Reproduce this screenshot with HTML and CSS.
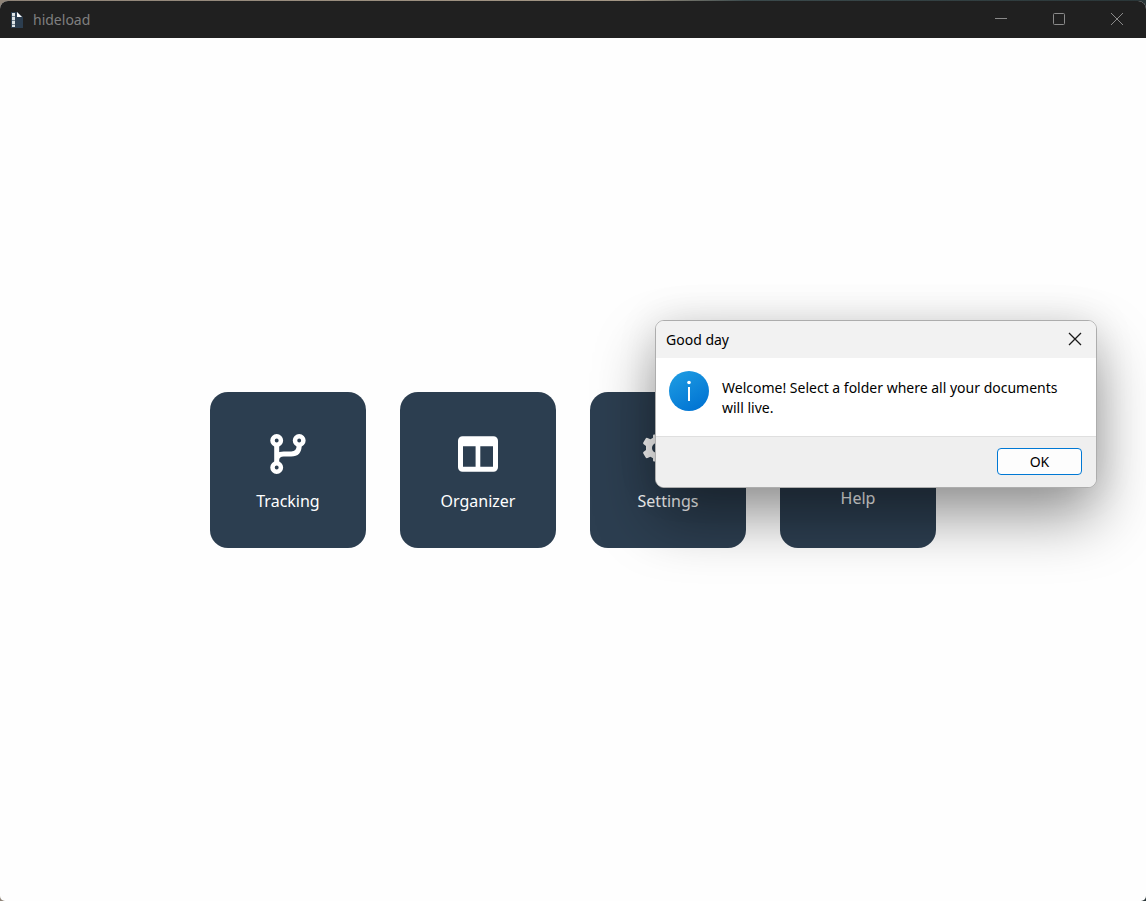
FILE: index.html
```html
<!DOCTYPE html>
<html lang="en">

<head>
    <meta charset="UTF-8" />
    <meta name="viewport" content="width=device-width, initial-scale=1.0" />
    <title>hideload</title>
    <link rel="stylesheet" href="styles.css">
</head>

<body>

    <div class="window">
        <!-- Title bar -->
        <header class="titlebar">
            <svg class="app-icon" viewBox="0 0 12 18" aria-hidden="true">
                <path d="M0 1h6l6 5v11H0z" fill="#2c3e50" />
                <path d="M6 1l5 5H6z" fill="#fff" />
                <path d="M2.500 2v14" stroke="#71808c" stroke-width="3" />
                <path d="M2.500 2v14" stroke="#dde3e6" stroke-width="3" stroke-dasharray="3 1" />
            </svg>
            <span class="app-name">hideload</span>
            <div class="window-buttons">
                <button aria-label="Minimize">
                    <svg viewBox="0 0 12 12"><path d="M0 5.500h12" /></svg>
                </button>
                <button aria-label="Maximize">
                    <svg viewBox="0 0 12 12"><rect x="0.500" y="0.500" width="11" height="11" rx="1" /></svg>
                </button>
                <button aria-label="Close">
                    <svg viewBox="0 0 12 12"><path d="M0 0l12 12M12 0L0 12" /></svg>
                </button>
            </div>
        </header>

        <!-- Main menu -->
        <main class="menu">
            <button class="card">
                <svg class="icon" viewBox="0 0 40 40" fill="none" stroke="#fff">
                    <g stroke-width="4.500">
                        <circle cx="8.700" cy="6.500" r="4.200" />
                        <circle cx="31.200" cy="6.500" r="4.200" />
                        <circle cx="8.700" cy="33.500" r="4.200" />
                    </g>
                    <path d="M8.700 11v18M31.200 11c0 6-3 9-8 9h-7.500c-4.500 0-7 2-7 6" stroke-width="5" />
                </svg>
                <span>Tracking</span>
            </button>
            <button class="card">
                <svg class="icon" viewBox="0 0 40 40" fill="#fff">
                    <path fill-rule="evenodd" d="M4.500 2.200h31a4.500 4.500 0 0 1 4.500 4.500v26.600a4.500 4.500 0 0 1-4.500 4.500h-31a4.500 4.500 0 0 1-4.500-4.500v-26.600a4.500 4.500 0 0 1 4.500-4.500zM5 12.200v20.500h12.600V12.200zM22.300 12.200v20.500H35V12.200z" />
                </svg>
                <span>Organizer</span>
            </button>
            <button class="card">
                <svg class="icon wide" viewBox="0 0 50 40" fill="#fff">
                    <path fill-rule="evenodd" d="M10 1.500Q10 0.500 11 0.500H17Q18 0.500 18 1.500V3.800L20.500 5.300L23.500 4Q24.700 3.500 25.300 4.500L27.700 8.500Q28.200 9.700 27.300 10.300L25 12V16L27.300 17.700Q28.200 18.300 27.700 19.500L25.300 23.500Q24.700 24.500 23.500 24L20.500 22.700L18 24.200V26.500Q18 27.500 17 27.500H11Q10 27.500 10 26.500V24.200L7.500 22.700L4.500 24Q3.300 24.500 2.700 23.500L0.300 19.500Q-0.200 18.300 0.700 17.700L3 16V12L0.700 10.300Q-0.200 9.700 0.300 8.500L2.700 4.500Q3.300 3.500 4.500 4L7.500 5.300L10 3.800zM14 9a5 5 0 1 0 0 10a5 5 0 1 0 0-10z" />
                    <g fill="none" stroke="#fff" stroke-width="4">
                        <circle cx="40" cy="8" r="4" />
                        <circle cx="40" cy="32" r="4" />
                    </g>
                </svg>
                <span>Settings</span>
            </button>
            <button class="card help">
                <svg class="icon" viewBox="0 0 40 40" fill="none" stroke="#fff" stroke-width="6">
                    <path d="M11 12c0-11 18-11 18 0 0 7-9 7-9 15M20 31v6" />
                </svg>
                <span>Help</span>
            </button>
        </main>
    </div>

    <!-- Welcome message -->
    <div class="dialog" role="dialog" aria-labelledby="dialog-title">
        <div class="dialog-title">
            <span id="dialog-title">Good day</span>
            <button class="dialog-close" aria-label="Close">
                <svg viewBox="0 0 12 12"><path d="M0 0l12 12M12 0L0 12" /></svg>
            </button>
        </div>
        <div class="dialog-body">
            <svg class="info" viewBox="0 0 40 40" aria-hidden="true">
                <defs>
                    <linearGradient id="blue" x1="0.2" y1="0" x2="0.8" y2="1">
                        <stop offset="0" stop-color="#1d9be2" />
                        <stop offset="1" stop-color="#0072d2" />
                    </linearGradient>
                </defs>
                <circle cx="20" cy="20" r="20" fill="url(#blue)" />
                <circle cx="20" cy="11.500" r="1.800" fill="#fff" />
                <path d="M20 16v14" stroke="#fff" stroke-width="2" />
            </svg>
            <p>Welcome! Select a folder where all your documents will live.</p>
        </div>
        <div class="dialog-footer">
            <button class="ok">OK</button>
        </div>
    </div>

</body>

</html>
```

FILE: styles.css
```css
* {
    box-sizing: border-box;
}

body {
    margin: 0;
    padding-top: 1px;
    height: 100vh;
    position: relative;
    overflow: hidden;
    background: linear-gradient(90deg, #8f8478 0%, #a39684 55%, #3b4a4c 65%, #2a3638 100%);
    font-family: "Segoe UI", "Noto Sans", "Open Sans", sans-serif;
    font-size: 14px;
}

button {
    padding: 0;
    border: none;
    font-family: inherit;
    cursor: pointer;
}

.window {
    height: 100%;
    display: flex;
    flex-direction: column;
    background-color: #fefefe;
    border-radius: 8px 8px 5px 5px;
    overflow: hidden;
}

/* Title bar */
.titlebar {
    display: flex;
    align-items: center;
    height: 37px;
    padding-left: 11px;
    background-color: #202020;
    color: #7f7f7f;
}

.app-icon {
    width: 12px;
    height: 18px;
    margin-right: 10px;
}

.window-buttons {
    display: flex;
    align-self: stretch;
    margin-left: auto;
}

.window-buttons button {
    width: 58px;
    display: flex;
    justify-content: center;
    align-items: center;
    padding-bottom: 1px;
    background: none;
}

.window-buttons svg,
.dialog-close svg {
    width: 12px;
    height: 12px;
    fill: none;
    stroke: #8a8a8a;
    overflow: visible;
}

/* Menu cards */
.menu {
    flex: 1;
    display: flex;
    justify-content: center;
    align-items: center;
    gap: 34px;
}

.card {
    width: 156px;
    height: 156px;
    display: flex;
    flex-direction: column;
    justify-content: center;
    align-items: center;
    gap: 15px;
    padding-top: 7px;
    background-color: #2c3e50;
    border-radius: 18px;
    color: white;
    font-size: 16px;
    line-height: 24px;
}

.card.help {
    gap: 9px;
}

.icon {
    width: 40px;
    height: 40px;
}

.icon.wide {
    width: 50px;
}

/* Dialog */
.dialog {
    position: absolute;
    top: 320px;
    right: 49px;
    width: 442px;
    background-color: white;
    border: 1px solid #adadad;
    border-radius: 9px;
    box-shadow: 0 30px 60px rgba(0, 0, 0, 0.4), 0 0 40px rgba(0, 0, 0, 0.1);
    overflow: hidden;
}

.dialog-title {
    display: flex;
    justify-content: space-between;
    align-items: center;
    height: 37px;
    padding: 0 15px 0 10px;
    background-color: #f2f2f2;
}

.dialog-close {
    display: flex;
    padding-bottom: 2px;
    background: none;
}

.dialog-close svg {
    stroke: #1a1a1a;
    stroke-width: 1.3;
}

.dialog-body {
    display: flex;
    gap: 13px;
    padding: 13px 24px 18px 13px;
}

.info {
    width: 40px;
    height: 40px;
    flex-shrink: 0;
}

.dialog-body p {
    flex: 1;
    margin: 7px 0 0;
    line-height: 20px;
}

.dialog-footer {
    display: flex;
    justify-content: flex-end;
    padding: 11px 14px 12px;
    background-color: #efefef;
    border-top: 1px solid #dfdfdf;
}

.ok {
    width: 85px;
    height: 27px;
    background-color: #fdfdfd;
    border: 1px solid #0078d4;
    border-radius: 4px;
    font-size: 14px;
    color: black;
}
```
